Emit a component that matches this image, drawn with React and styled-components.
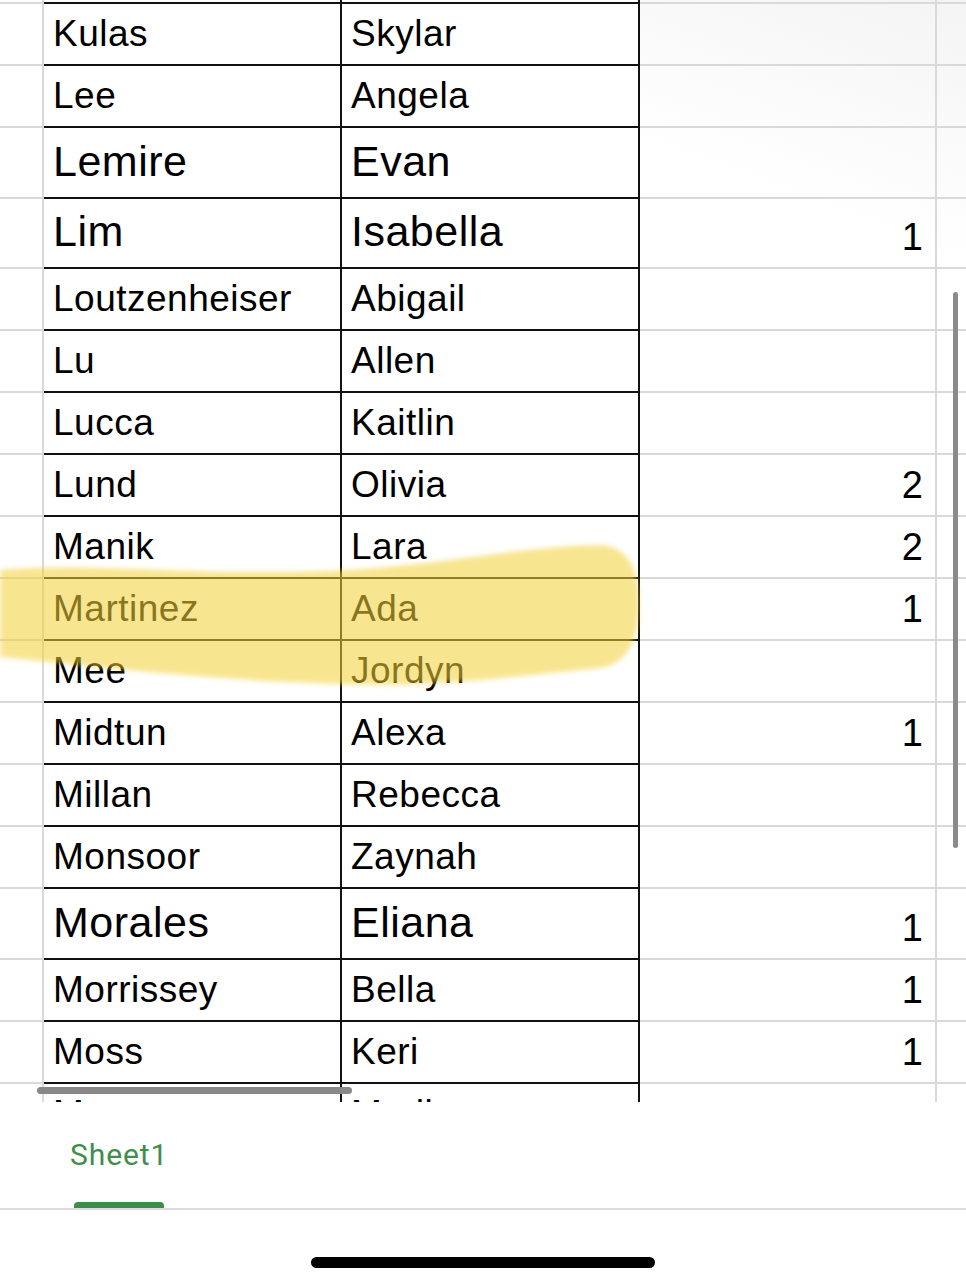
import styled, { createGlobalStyle } from "styled-components";

const rows = [
  { a: "Kulas", b: "Skylar", c: "" },
  { a: "Lee", b: "Angela", c: "" },
  { a: "Lemire", b: "Evan", c: "", big: true, h: 71 },
  { a: "Lim", b: "Isabella", c: "1", big: true, h: 70 },
  { a: "Loutzenheiser", b: "Abigail", c: "" },
  { a: "Lu", b: "Allen", c: "" },
  { a: "Lucca", b: "Kaitlin", c: "" },
  { a: "Lund", b: "Olivia", c: "2" },
  { a: "Manik", b: "Lara", c: "2" },
  { a: "Martinez", b: "Ada", c: "1" },
  { a: "Mee", b: "Jordyn", c: "" },
  { a: "Midtun", b: "Alexa", c: "1" },
  { a: "Millan", b: "Rebecca", c: "" },
  { a: "Monsoor", b: "Zaynah", c: "" },
  { a: "Morales", b: "Eliana", c: "1", big: true, h: 71 },
  { a: "Morrissey", b: "Bella", c: "1" },
  { a: "Moss", b: "Keri", c: "1" },
  { a: "Moran", b: "Madison", c: "" },
];

const GlobalStyle = createGlobalStyle`
  html, body {
    margin: 0;
    padding: 0;
    background: #fff;
  }
  body {
    font-family: "Liberation Sans", Arial, sans-serif;
    width: 966px;
    height: 1280px;
    overflow: hidden;
  }
`;

const Screen = styled.div`
  width: 966px;
  height: 1280px;
  display: flex;
  flex-direction: column;
  background: #fff;
`;

const Viewport = styled.div`
  position: relative;
  height: 1102px;
  overflow: hidden;
  flex-shrink: 0;
  background: linear-gradient(200deg, #f4f4f4 0%, #fff 18%);
`;

const Row = styled.div`
  display: grid;
  grid-template-columns: 44px 298px 298px 297px 1fr;
  grid-template-rows: 100%;
  height: ${(p) => p.$h}px;
`;

const Gutter = styled.div`
  border-right: 2px solid #d9d9d9;
  border-bottom: 2px solid #d9d9d9;
`;

const NameCell = styled.div`
  display: flex;
  align-items: flex-end;
  padding: 0 0 ${(p) => (p.$big ? 14 : 12)}px 9px;
  border-right: 2px solid #111;
  border-bottom: 2px solid #111;
  background: #fff;
  font-size: ${(p) => (p.$big ? 43 : 37)}px;
  letter-spacing: 0.5px;
  line-height: 1;
  color: #000;
  white-space: nowrap;
  overflow: hidden;
`;

const EdgeCell = styled.div`
  border-right: 2px solid ${(p) => (p.$dark ? "#111" : "#d9d9d9")};
  border-bottom: 2px solid ${(p) => (p.$dark ? "#111" : "#d9d9d9")};
  background: ${(p) => (p.$dark ? "#fff" : "transparent")};
`;

const CountCell = styled.div`
  display: flex;
  align-items: flex-end;
  justify-content: flex-end;
  padding: 0 12px 11px 0;
  border-right: 2px solid #d9d9d9;
  border-bottom: 2px solid #d9d9d9;
  font-size: 38px;
  line-height: 1;
  color: #000;
`;

const Spare = styled.div`
  border-bottom: 2px solid #d9d9d9;
`;

const Highlight = styled.svg`
  position: absolute;
  left: 0;
  top: 0;
  width: 966px;
  height: 1102px;
  pointer-events: none;
`;

const VScroll = styled.div`
  position: absolute;
  right: 8px;
  top: 292px;
  width: 5px;
  height: 556px;
  border-radius: 3px;
  background: #8b8b8b;
`;

const HScroll = styled.div`
  position: absolute;
  left: 37px;
  top: 1087px;
  width: 315px;
  height: 7px;
  border-radius: 4px;
  background: #888;
`;

const TabBar = styled.div`
  height: 106px;
  border-bottom: 2px solid #dcdcdc;
  padding-left: 70px;
  display: flex;
  flex-direction: column;
  justify-content: space-between;
  flex-shrink: 0;
`;

const TabLabel = styled.div`
  margin-top: 35px;
  font-family: Roboto, "Open Sans", sans-serif;
  font-size: 30px;
  color: #3f8e4a;
  letter-spacing: 0.9px;
`;

const TabMark = styled.div`
  width: 90px;
  height: 6px;
  margin-left: 4px;
  border-radius: 4px 4px 0 0;
  background: #3f8b48;
`;

const HomeArea = styled.div`
  flex: 1;
  display: flex;
  justify-content: center;
  padding-top: 47px;
`;

const HomeBar = styled.div`
  width: 344px;
  height: 11px;
  border-radius: 6px;
  background: #000;
`;

function SheetRow({ row }) {
  return (
    <Row $h={row.h || 62}>
      <Gutter />
      <NameCell $big={row.big}>{row.a}</NameCell>
      <NameCell $big={row.big}>{row.b}</NameCell>
      <CountCell>{row.c}</CountCell>
      <Spare />
    </Row>
  );
}

export default function App() {
  return (
    <Screen>
      <GlobalStyle />
      <Viewport>
        <Row $h={4}>
          <Gutter />
          <EdgeCell $dark />
          <EdgeCell $dark />
          <EdgeCell />
          <Spare />
        </Row>
        {rows.map((r) => (
          <SheetRow key={r.a} row={r} />
        ))}
        <Highlight viewBox="0 0 966 1102">
          <defs>
            <filter id="soft" x="-5%" y="-20%" width="110%" height="140%">
              <feGaussianBlur stdDeviation="2.5" />
            </filter>
          </defs>
          <path
            d="M0,570 C90,562 190,576 330,571 C440,566 520,546 600,545 Q638,547 639,600 Q640,662 600,668 C520,676 430,688 340,684 C220,681 110,668 0,657 Z"
            fill="#f2d13a"
            fillOpacity="0.56"
            filter="url(#soft)"
          />
        </Highlight>
        <VScroll />
        <HScroll />
      </Viewport>
      <TabBar>
        <TabLabel>Sheet1</TabLabel>
        <TabMark />
      </TabBar>
      <HomeArea>
        <HomeBar />
      </HomeArea>
    </Screen>
  );
}
